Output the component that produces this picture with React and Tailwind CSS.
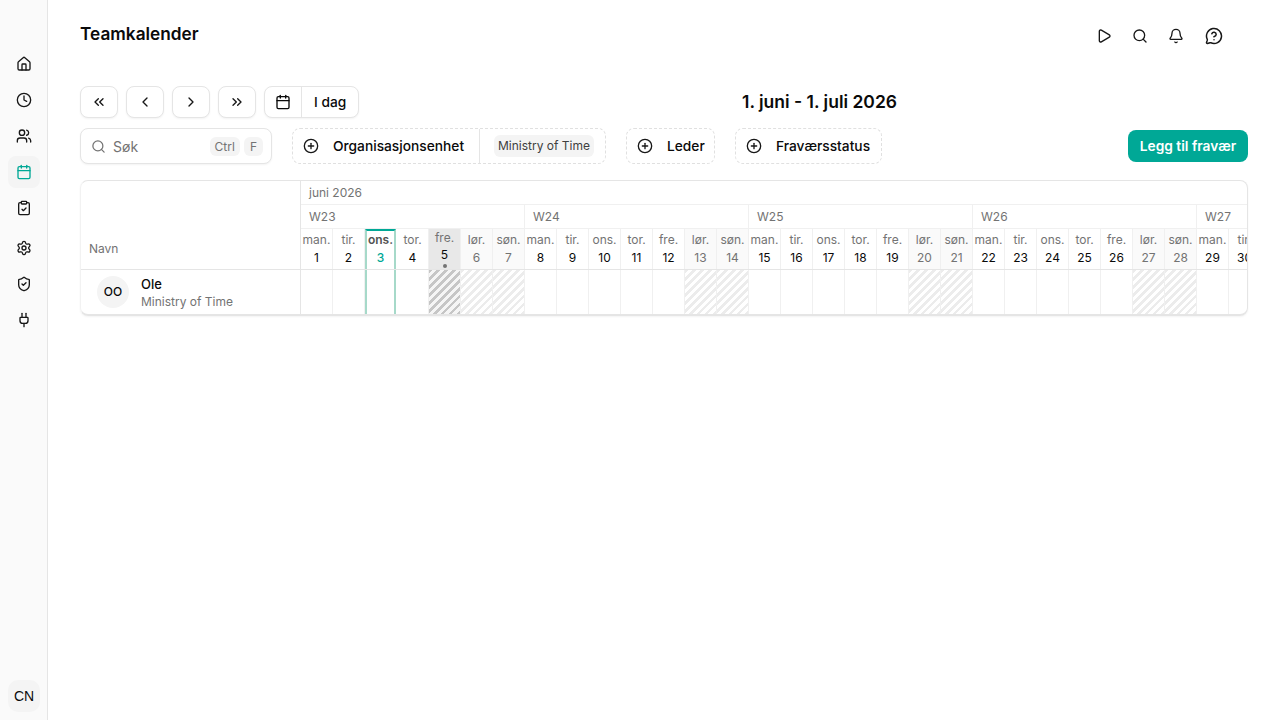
import React from "react";
import {
  Bell,
  Calendar,
  ChevronLeft,
  ChevronRight,
  ChevronsLeft,
  ChevronsRight,
  CirclePlus,
  ClipboardCheck,
  Clock,
  House,
  MessageCircleQuestion,
  Play,
  Plug,
  Search,
  Settings,
  ShieldCheck,
  Users,
} from "lucide-react";

const dayNames = ["man.", "tir.", "ons.", "tor.", "fre.", "lør.", "søn."];
const days = Array.from({ length: 30 }, (_, i) => ({ n: i + 1, name: dayNames[i % 7], weekend: i % 7 >= 5 }));
const weeks = ["W23", "W24", "W25", "W26"];

const lightHatch =
  "bg-[repeating-linear-gradient(135deg,#ececec_0,#ececec_2.5px,#ffffff_2.5px,#ffffff_5.6px)]";
const darkHatch =
  "bg-[repeating-linear-gradient(135deg,#c6c6c6_0,#c6c6c6_2.5px,#f5f5f5_2.5px,#f5f5f5_5.6px)]";

function SideIcon({ icon: Icon, active }) {
  return (
    <div className={"flex h-8 w-8 items-center justify-center rounded-lg " + (active ? "bg-[#f4f4f4] text-[#00a896]" : "text-[#171717]")}>
      <Icon size={16} />
    </div>
  );
}

function NavButton({ icon: Icon }) {
  return (
    <button className="flex h-8 w-[38px] items-center justify-center rounded-lg border border-[#e5e5e5] bg-white text-[#171717] shadow-xs">
      <Icon size={16} />
    </button>
  );
}

function FilterLabel({ label, className }) {
  return (
    <div className={"flex items-center " + className}>
      <CirclePlus size={16} className="text-[#171717]" />
      <span className="text-[13.75px] font-medium text-[#0a0a0a]">{label}</span>
    </div>
  );
}

function DayHeader({ day }) {
  const today = day.n === 3;
  const selected = day.n === 5;
  let box = "w-8 border-r border-[#f0f0f0] pt-[3px] ";
  if (today) box = "mr-[1px] w-[31px] border-x-2 border-t-2 border-x-[#a6d9c9] border-t-[#00a896] pt-[1px] ";
  else if (selected) box = "w-8 border-r border-[#f0f0f0] bg-[#e8e8e8] pt-[1px] ";
  else if (day.weekend) box += "bg-[#fafafa] ";
  let num = "text-[#0a0a0a]";
  if (today) num = "text-[#00a896] font-medium";
  if (day.weekend) num = "text-[#737373]";
  return (
    <div className={"relative flex h-10 shrink-0 flex-col items-center whitespace-nowrap text-xs " + box}>
      <span className={"leading-[16px] " + (today ? "font-semibold text-[#525252]" : "text-[#737373]")}>{day.name}</span>
      <span className={(selected ? "mt-[1px]" : "mt-[2px]") + " leading-[16px] " + num}>{day.n}</span>
      {selected && <span className="absolute bottom-[1px] h-1 w-1 rounded-full bg-[#737373]" />}
    </div>
  );
}

function DayCell({ day }) {
  let box = "w-8 border-r border-[#f0f0f0] ";
  if (day.n === 3) box = "mr-[1px] w-[31px] border-x-2 border-[#a6d9c9] ";
  else if (day.n === 5) box += darkHatch;
  else if (day.weekend) box += lightHatch;
  return <div className={"h-11 shrink-0 " + box} />;
}

export default function App() {
  return (
    <div className="flex h-screen bg-white font-['Inter',sans-serif] text-[#0a0a0a]">
      <aside className="flex w-12 shrink-0 flex-col items-center border-r border-[#e5e5e5] bg-[#fafafa] pt-12 pb-2 pl-px">
        <div className="flex flex-col gap-1">
          <SideIcon icon={House} />
          <SideIcon icon={Clock} />
          <SideIcon icon={Users} />
          <SideIcon icon={Calendar} active />
          <SideIcon icon={ClipboardCheck} />
          <div className="mt-1">
            <SideIcon icon={Settings} />
          </div>
          <SideIcon icon={ShieldCheck} />
          <SideIcon icon={Plug} />
        </div>
        <div className="mt-auto flex h-8 w-8 items-center justify-center rounded-[10px] bg-[#f4f4f4] font-['Liberation_Sans',sans-serif] text-sm">
          CN
        </div>
      </aside>

      <main className="min-w-0 flex-1 px-8">
        <div className="flex h-[86px] items-start justify-between">
          <h1 className="pt-[22px] text-[17.25px] leading-[24px] font-semibold">Teamkalender</h1>
          <div className="mr-[25px] flex items-center gap-5 pt-[27px] text-[#171717]">
            <Play size={16} className="-ml-[1px]" />
            <Search size={16} />
            <Bell size={16} />
            <MessageCircleQuestion size={18} className="ml-[1px]" />
          </div>
        </div>

        <div className="flex h-8 items-center gap-2">
          <NavButton icon={ChevronsLeft} />
          <NavButton icon={ChevronLeft} />
          <NavButton icon={ChevronRight} />
          <NavButton icon={ChevronsRight} />
          <div className="flex h-8 w-[95px] items-center rounded-lg border border-[#e5e5e5] bg-white shadow-xs">
            <div className="flex h-full w-[37px] shrink-0 items-center justify-center border-r border-[#e5e5e5]">
              <Calendar size={16} />
            </div>
            <span className="pl-3 text-[13.75px] font-medium whitespace-nowrap">I dag</span>
          </div>
          <div className="ml-[375px] text-[17.5px] font-semibold whitespace-nowrap">1. juni - 1. juli 2026</div>
        </div>

        <div className="mt-[10px] flex h-9 items-center">
          <div className="flex h-9 w-[192px] items-center rounded-lg border border-[#e5e5e5] bg-white pr-2 pl-[10px] shadow-xs">
            <Search size={15} className="text-[#737373]" />
            <span className="mt-[1px] ml-[7px] text-sm text-[#737373]">Søk</span>
            <span className="ml-auto rounded-md bg-[#f4f4f4] px-[5px] py-[2px] text-xs leading-[15px] text-[#737373]">Ctrl</span>
            <span className="ml-1 rounded-md bg-[#f4f4f4] px-[6px] py-[2px] text-xs leading-[15px] text-[#737373]">F</span>
          </div>

          <div className="ml-5 flex h-9 w-[314px] items-center rounded-lg border border-dashed border-[#e0e0e0]">
            <FilterLabel label="Organisasjonsenhet" className="h-full w-[187px] shrink-0 gap-[14px] border-r border-[#e5e5e5] pl-[10px]" />
            <span className="ml-[14px] rounded-md bg-[#f4f4f4] px-1 py-[2px] text-xs leading-[18px] text-[#404040]">Ministry of Time</span>
          </div>

          <FilterLabel label="Leder" className="ml-5 h-9 w-[89px] gap-[14px] rounded-lg border border-dashed border-[#e0e0e0] pl-[10px]" />
          <FilterLabel label="Fraværsstatus" className="ml-5 h-9 w-[147px] gap-[14px] rounded-lg border border-dashed border-[#e0e0e0] pl-[10px]" />

          <button className="ml-auto h-8 w-[120px] rounded-lg bg-[#00a896] text-[13.75px] font-semibold text-white">Legg til fravær</button>
        </div>

        <div className="mt-4 flex overflow-hidden rounded-lg border border-b-2 border-[#e5e5e5] border-l-[#f2f2f2] shadow-xs">
          <div className="w-[220px] shrink-0 border-r border-[#e5e5e5]">
            <div className="flex h-[89px] items-end border-b border-[#e5e5e5] px-2 pb-3 text-xs text-[#737373]">Navn</div>
            <div className="flex h-11 items-center gap-3 pl-4">
              <div className="flex h-8 w-8 items-center justify-center rounded-full bg-[#f4f4f4] text-xs font-medium">OO</div>
              <div>
                <div className="text-[13px] leading-[18px] font-medium">Ole</div>
                <div className="pt-[1px] text-xs leading-[16px] text-[#737373]">Ministry of Time</div>
              </div>
            </div>
          </div>

          <div className="min-w-0 flex-1 overflow-hidden">
            <div className="h-6 border-b border-[#f0f0f0] px-2 text-xs leading-[23px] text-[#737373]">juni 2026</div>
            <div className="flex h-6 border-b border-[#f0f0f0]">
              {weeks.map((w) => (
                <div key={w} className="w-[224px] shrink-0 border-r border-[#f0f0f0] px-2 text-xs leading-[23px] text-[#737373]">{w}</div>
              ))}
              <div className="w-[224px] shrink-0 px-2 text-xs leading-[23px] text-[#737373]">W27</div>
            </div>
            <div className="flex border-b border-[#e5e5e5]">
              {days.map((d) => <DayHeader key={d.n} day={d} />)}
            </div>
            <div className="flex">
              {days.map((d) => <DayCell key={d.n} day={d} />)}
            </div>
          </div>
        </div>
      </main>
    </div>
  );
}
